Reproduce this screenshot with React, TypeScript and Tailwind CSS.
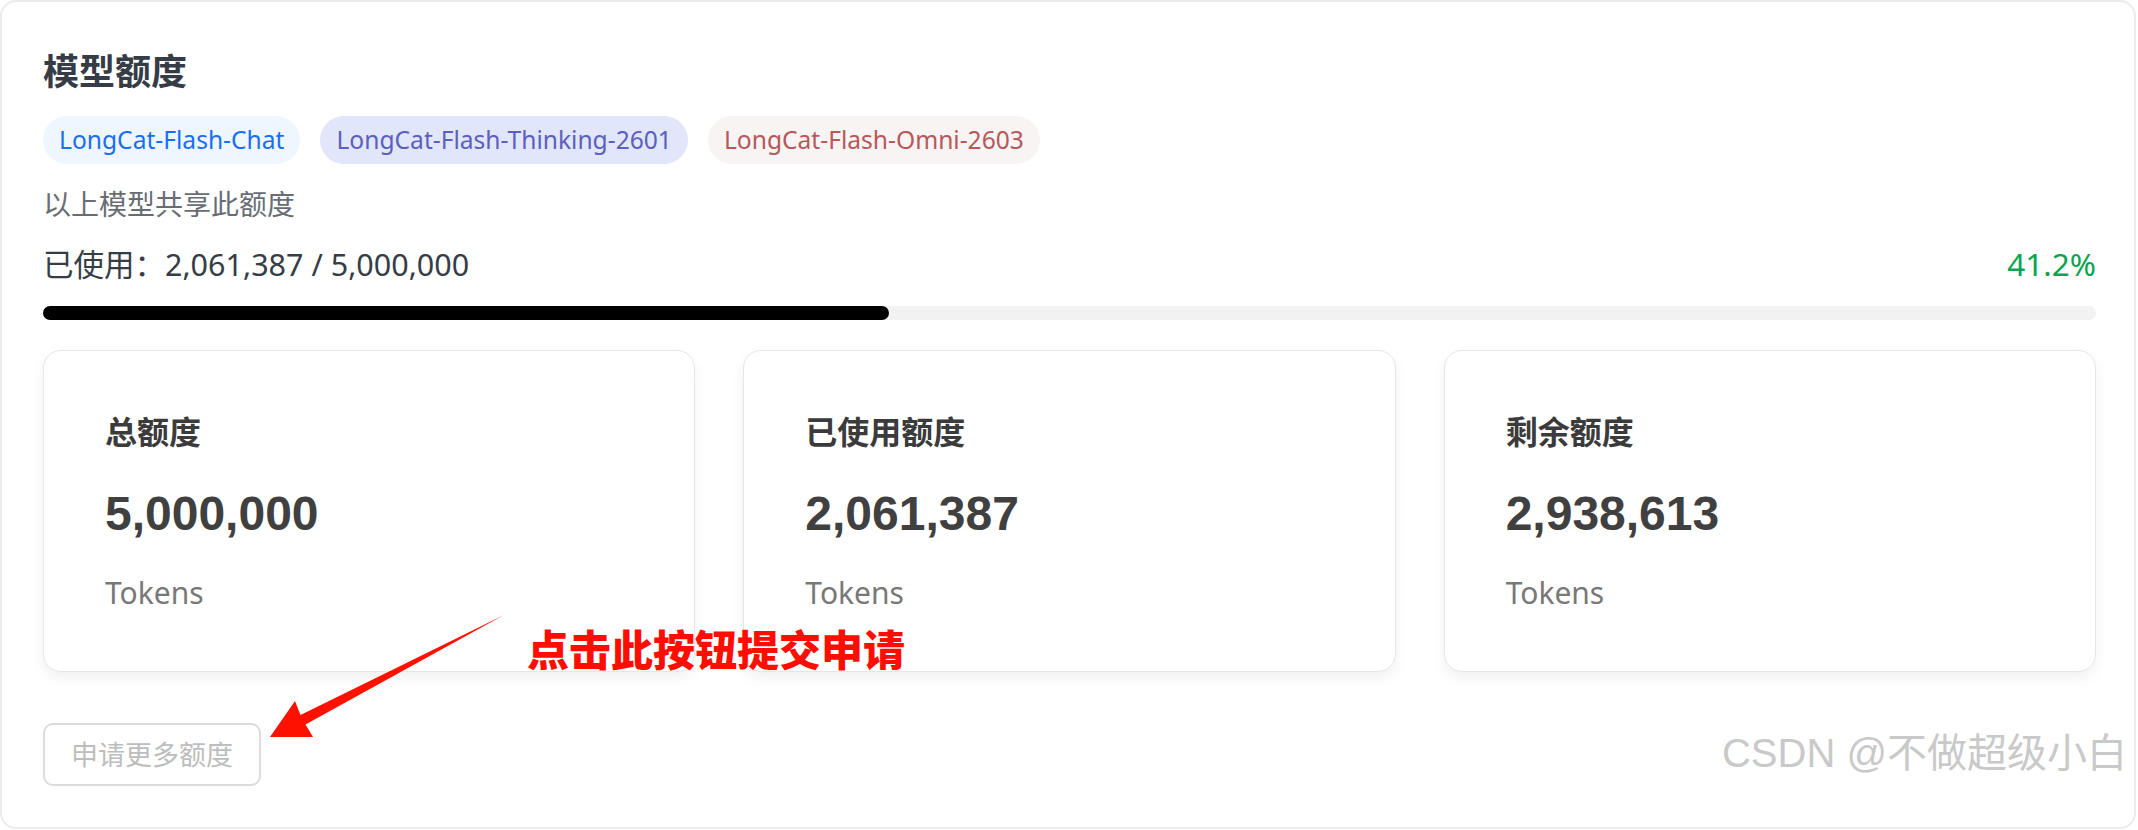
import React from "react";

const tags = [
    { name: "LongCat-Flash-Chat", cls: "bg-[#eef6ff] text-[#1a6ef5]" },
    { name: "LongCat-Flash-Thinking-2601", cls: "bg-[#e1e6fb] text-[#5c5fbf]" },
    { name: "LongCat-Flash-Omni-2603", cls: "bg-[#f8f4f4] text-[#b7585a]" },
];

const total = 5000000;
const used = 2061387;

const stats = [
    { label: "总额度", value: total },
    { label: "已使用额度", value: used },
    { label: "剩余额度", value: total - used },
];

const fmt = (n: number) => n.toLocaleString("en-US");

const StatCard = ({ label, value }: { label: string; value: number }) => (
    <div className="flex-1 flex flex-col rounded-[18px] border border-[#e6e6e6] bg-white pl-[61px] pt-[59px] pb-[57px] shadow-[0_6px_14px_rgba(0,0,0,0.06)]">
        <div className="text-[32px] leading-[44px] font-bold text-[#3b3b3b]">
            {label}
        </div>
        <div className="mt-[32px] font-['Liberation_Sans',Arial,sans-serif] text-[48px] leading-[56px] font-bold text-[#404040]">
            {fmt(value)}
        </div>
        <div className="mt-[30px] text-[30px] leading-[42px] text-[#787878]">
            Tokens
        </div>
    </div>
);

const App = () => {
    const pct = ((used / total) * 100).toFixed(1);

    return (
        <div className="relative w-[2138px] h-[830px] bg-white font-['Noto_Sans','Noto_Sans_CJK_SC',sans-serif]">
            <div className="w-[2136px] h-[829px] rounded-[16px] border-2 border-[#ebebeb] pl-[41px] pr-[38px] pt-[45px]">
                <h2 className="text-[36px] leading-[50px] font-bold text-[#363c46]">
                    模型额度
                </h2>

                <div className="mt-[19px] flex gap-[20px]">
                    {tags.map((t) => (
                        <span
                            key={t.name}
                            className={`rounded-full px-4 text-[24.6px] leading-[48px] ${t.cls}`}
                        >
                            {t.name}
                        </span>
                    ))}
                </div>

                <p className="mt-[20px] text-[28px] leading-[40px] text-[#686d74]">
                    以上模型共享此额度
                </p>

                <div className="mt-[20px] flex items-center justify-between leading-[40px]">
                    <span className="text-[30.5px] text-[#363d47]">
                        已使用：{fmt(used)} / {fmt(total)}
                    </span>
                    <span className="text-[31.5px] text-[#08a550]">{pct}%</span>
                </div>

                <div className="mt-[22px] h-[14px] rounded-full bg-[#f2f2f2]">
                    <div
                        className="h-full rounded-full bg-black"
                        style={{ width: `${pct}%` }}
                    />
                </div>

                <div className="mt-[30px] flex gap-[48px]">
                    {stats.map((s) => (
                        <StatCard key={s.label} label={s.label} value={s.value} />
                    ))}
                </div>

                <button className="mt-[51px] rounded-[10px] border-2 border-[#dcdcdc] px-[26px] text-[27px] leading-[59px] text-[#bdbdbd]">
                    申请更多额度
                </button>
            </div>

            {/* annotation overlay */}
            <svg
                className="pointer-events-none absolute left-0 top-0"
                width="2138"
                height="830"
                viewBox="0 0 2138 830"
            >
                <polygon
                    points="504,615 300.5,715 295,701 270,737 313,737 305.5,724.5"
                    fill="#ff1100"
                />
            </svg>
            <div className="absolute left-[527px] top-[624px] font-['Noto_Sans_CJK_SC',sans-serif] text-[42px] leading-[48px] font-black text-[#ff0d00]">
                点击此按钮提交申请
            </div>

            <div className="absolute right-[11px] top-[731px] whitespace-nowrap font-['Liberation_Sans_Narrow','Liberation_Sans','Noto_Sans_CJK_SC',sans-serif] text-[40px] leading-[44px] text-[#c9c9c9]">
                CSDN @不做超级小白
            </div>
        </div>
    );
};

export default App;
